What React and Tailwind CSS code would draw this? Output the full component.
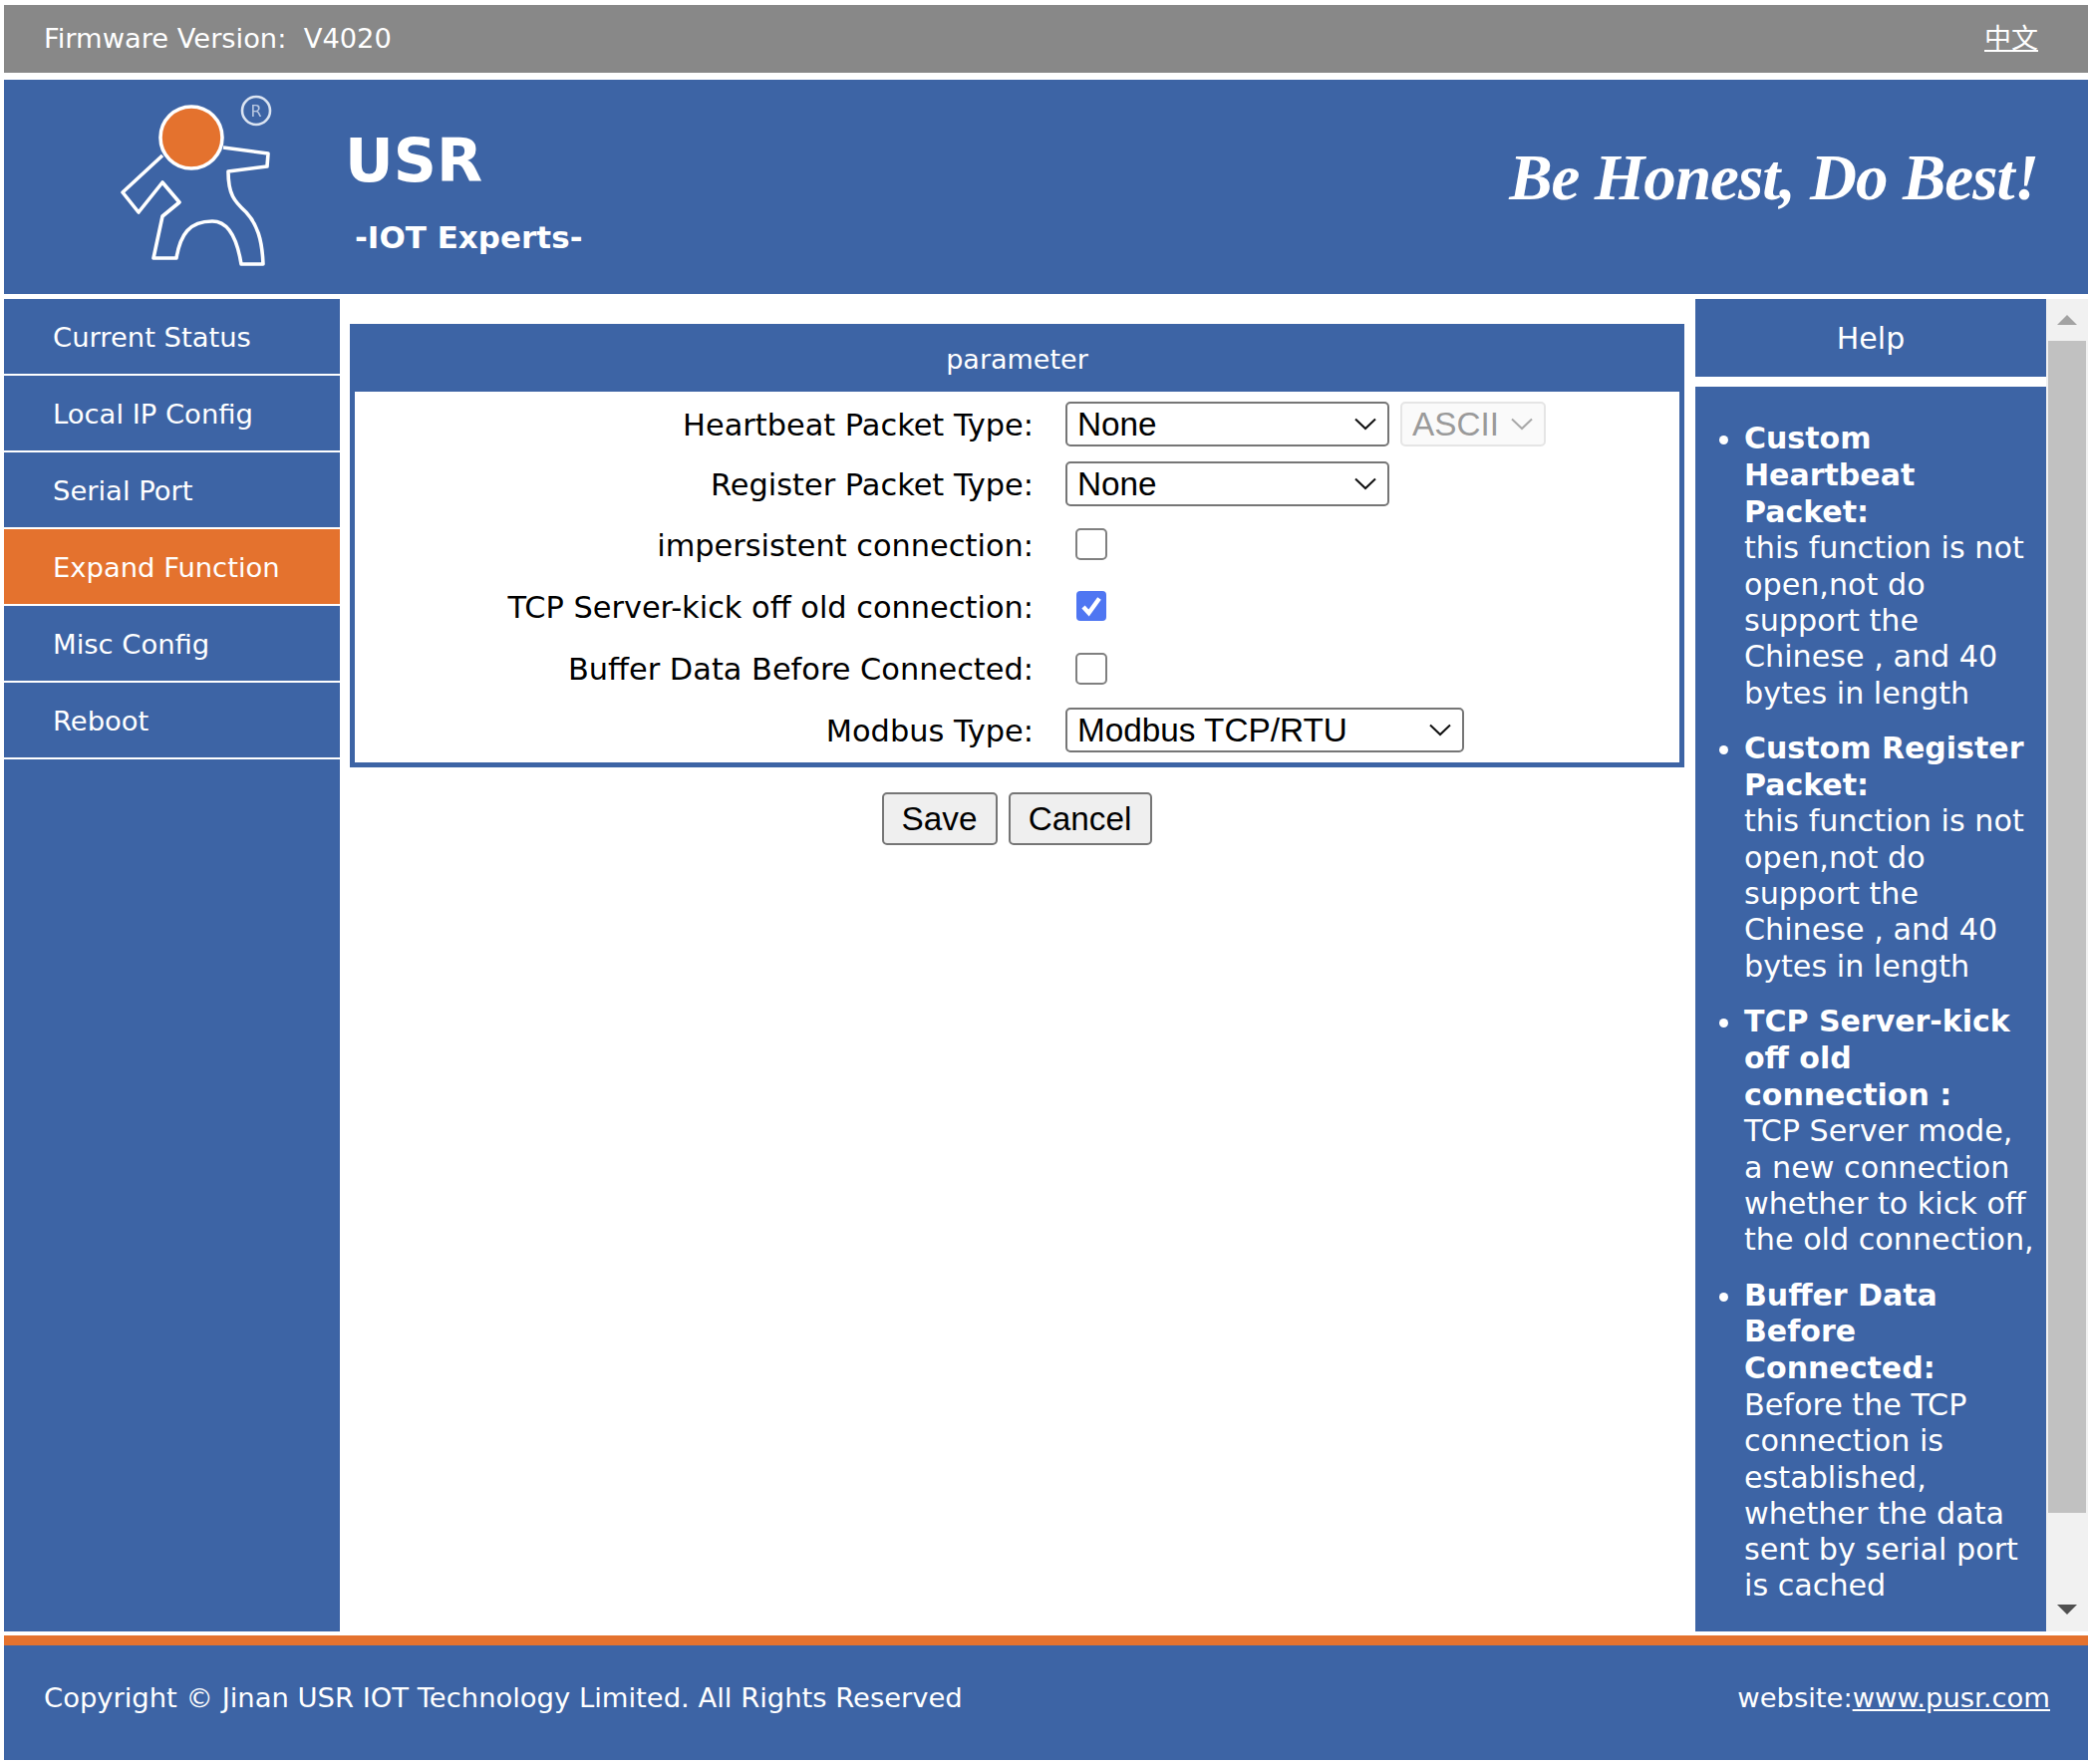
import React from "react";

const navItems = ["Current Status", "Local IP Config", "Serial Port", "Expand Function", "Misc Config", "Reboot"];

const helpItems = [
  { title: "Custom Heartbeat Packet:", body: "this function is not open,not do support the Chinese , and 40 bytes in length" },
  { title: "Custom Register Packet:", body: "this function is not open,not do support the Chinese , and 40 bytes in length" },
  { title: "TCP Server-kick off old connection :", body: "TCP Server mode, a new connection whether to kick off the old connection," },
  { title: "Buffer Data Before Connected:", body: "Before the TCP connection is established, whether the data sent by serial port is cached" },
];

function Logo() {
  return (
    <svg viewBox="0 0 220 210" className="w-[220px] h-[210px] blur-[0.5px]">
      <path
        d="M83 76 L43 113 L59 133 L83 103 L100 123 L83 137 L74 179 L97 179 C101 155 110 142 133 142 C150 142 158 160 162 185 L184 185 C183 160 178 145 167 133 C155 122 149 115 149 92 L188 87 L189 74 L144 68"
        fill="none"
        stroke="#fff"
        strokeWidth="3.6"
        strokeLinejoin="round"
      />
      <circle cx="112" cy="58" r="31" fill="#e4722e" stroke="#fff" strokeWidth="3.6" />
      <circle cx="177" cy="31" r="14" fill="none" stroke="#dbe4f2" strokeWidth="2.6" />
      <text x="177" y="37" textAnchor="middle" fontSize="16" fill="#b9c8e2" fontFamily="'DejaVu Sans', sans-serif">R</text>
    </svg>
  );
}

function Chevron({ color = "#111" }) {
  return (
    <svg viewBox="0 0 22 13" className="w-[22px] h-[13px]">
      <path d="M1 1.5 L11 11 L21 1.5" fill="none" stroke={color} strokeWidth="2" />
    </svg>
  );
}

function Select({ width, value, disabled }) {
  return (
    <div className={`relative h-[45px] ${width}`}>
      <select
        disabled={disabled}
        defaultValue={value}
        className={`appearance-none w-full h-full rounded-[5px] border-2 pt-[2px] text-[33.3px] leading-none font-['Liberation_Sans',sans-serif] ${
          disabled ? "pl-[10px] border-[#e5e5e5] bg-[#fafafa] text-[#9a9a9a] opacity-100" : "pl-[10px] border-[#767676] bg-white text-black"
        }`}
      >
        <option>{value}</option>
      </select>
      <span className="absolute right-[13px] top-[16px] flex">
        <Chevron color={disabled ? "#a8a8a8" : "#111"} />
      </span>
    </div>
  );
}

function Checkbox({ checked }) {
  if (checked) {
    return (
      <span className="ml-[11px] flex items-center justify-center w-[30px] h-[30px] rounded-[4px] bg-[#4f76f2]">
        <svg viewBox="0 0 30 30" className="w-[30px] h-[30px]">
          <path d="M7 16 L12.5 22 L23 7.5" fill="none" stroke="#fff" strokeWidth="4.4" />
        </svg>
      </span>
    );
  }
  return <input type="checkbox" className="ml-[10px] appearance-none w-[32px] h-[32px] rounded-[5px] border-2 border-[#808080] bg-white" />;
}

function Row({ label, height, children }) {
  return (
    <div className={`flex items-center ${height}`}>
      <label className="w-[681px] pt-[3px] text-right text-[30.4px] text-black whitespace-nowrap">{label}:</label>
      <div className="ml-[32px] flex items-center gap-[11px]">{children}</div>
    </div>
  );
}

export default function App() {
  return (
    <div className="w-[2095px] h-[1770px] bg-white pl-[4px] pt-[5px] pb-[4px] flex flex-col font-['DejaVu_Sans',sans-serif] text-white">
      <div className="h-[68px] shrink-0 bg-[#888888] flex items-center justify-between pl-[40px] pr-[50px] text-[27.3px]">
        <span>Firmware Version:&nbsp;&nbsp;V4020</span>
        <a className="underline text-[27px] pb-[3px] font-['Noto_Sans_CJK_SC',sans-serif]">中文</a>
      </div>

      <div className="mt-[7px] h-[215px] shrink-0 bg-[#3d64a5] flex">
        <div className="ml-[76px] w-[266px]">
          <Logo />
        </div>
        <div className="flex flex-col">
          <span className="mt-[38px] text-[60px] leading-[86px] font-bold">USR</span>
          <span className="mt-[14px] ml-[10px] text-[31px] leading-[40px] font-bold">-IOT Experts-</span>
        </div>
        <span className="ml-auto mr-[50px] mt-[53px] h-[90px] text-[65px] leading-[90px] tracking-[-0.95px] font-bold italic font-['Liberation_Serif',serif]">
          Be Honest, Do Best!
        </span>
      </div>

      <div className="mt-[5px] h-[1337px] shrink-0 flex">
        <nav className="w-[337px] shrink-0 bg-[#3d64a5] flex flex-col">
          {navItems.map((item) => (
            <div
              key={item}
              className={`h-[77px] border-b-2 border-white pl-[49px] pt-[2px] flex items-center text-[27.4px] ${
                item === "Expand Function" ? "bg-[#e4722e]" : ""
              }`}
            >
              {item}
            </div>
          ))}
        </nav>

        <main className="w-[1360px] shrink-0 px-[10px] pt-[25px]">
          <div className="w-[1339px] border-[5px] border-t-0 border-[#3d64a5]">
            <div className="h-[68px] -mx-[5px] bg-[#3d64a5] flex items-center justify-center text-[27px] pt-[5px]">parameter</div>
            <div className="pt-[2px] pb-[3px] bg-white">
              <Row label="Heartbeat Packet Type" height="h-[60px]">
                <Select width="w-[325px]" value="None" />
                <Select width="w-[146px]" value="ASCII" disabled />
              </Row>
              <Row label="Register Packet Type" height="h-[60px]">
                <Select width="w-[325px]" value="None" />
              </Row>
              <Row label="impersistent connection" height="h-[62px]">
                <Checkbox />
              </Row>
              <Row label="TCP Server-kick off old connection" height="h-[62px]">
                <Checkbox checked />
              </Row>
              <Row label="Buffer Data Before Connected" height="h-[63px]">
                <Checkbox />
              </Row>
              <Row label="Modbus Type" height="h-[60px]">
                <Select width="w-[400px]" value="Modbus TCP/RTU" />
              </Row>
            </div>
          </div>
          <div className="mt-[25px] pr-[2px] flex justify-center gap-[11px] text-black font-['Liberation_Sans',sans-serif] text-[33.3px]">
            <button className="w-[116px] h-[53px] bg-[#efefef] border-2 border-[#767676] rounded-[5px]">Save</button>
            <button className="w-[144px] h-[53px] bg-[#efefef] border-2 border-[#767676] rounded-[5px]">Cancel</button>
          </div>
        </main>

        <aside className="w-[352px] shrink-0 flex flex-col">
          <div className="h-[78px] shrink-0 bg-[#3d64a5] flex items-center justify-center text-[30px]">Help</div>
          <div className="mt-[10px] flex-1 bg-[#3d64a5] pt-[34px] overflow-hidden">
            <ul className="list-disc pl-[49px] pr-[11px] flex flex-col gap-[19px] text-[30.2px] leading-[36.3px]">
              {helpItems.map((item) => (
                <li key={item.title}>
                  <b className="font-bold text-[30px] leading-[36.8px]">{item.title}</b>
                  <br />
                  {item.body}
                </li>
              ))}
            </ul>
          </div>
        </aside>

        <div className="w-[42px] shrink-0 bg-[#f1f1f1] flex flex-col items-center">
          <div className="h-[42px] shrink-0 flex items-center justify-center">
            <div className="w-0 h-0 border-x-[10px] border-x-transparent border-b-[10px] border-b-[#a3a3a3]" />
          </div>
          <div className="w-[38px] h-[1176px] shrink-0 bg-[#c1c1c1]" />
          <div className="flex-1 flex items-center justify-center pt-[75px]">
            <div className="w-0 h-0 border-x-[10px] border-x-transparent border-t-[10px] border-t-[#505050]" />
          </div>
        </div>
      </div>

      <div className="mt-[4px] h-[10px] shrink-0 bg-[#e4722e]" />
      <div className="h-[115px] shrink-0 bg-[#3d64a5] flex items-center justify-between pl-[40px] pr-[38px] pb-[10px] text-[27.4px]">
        <span>Copyright © Jinan USR IOT Technology Limited. All Rights Reserved</span>
        <span>
          website:<a className="underline">www.pusr.com</a>
        </span>
      </div>
    </div>
  );
}
